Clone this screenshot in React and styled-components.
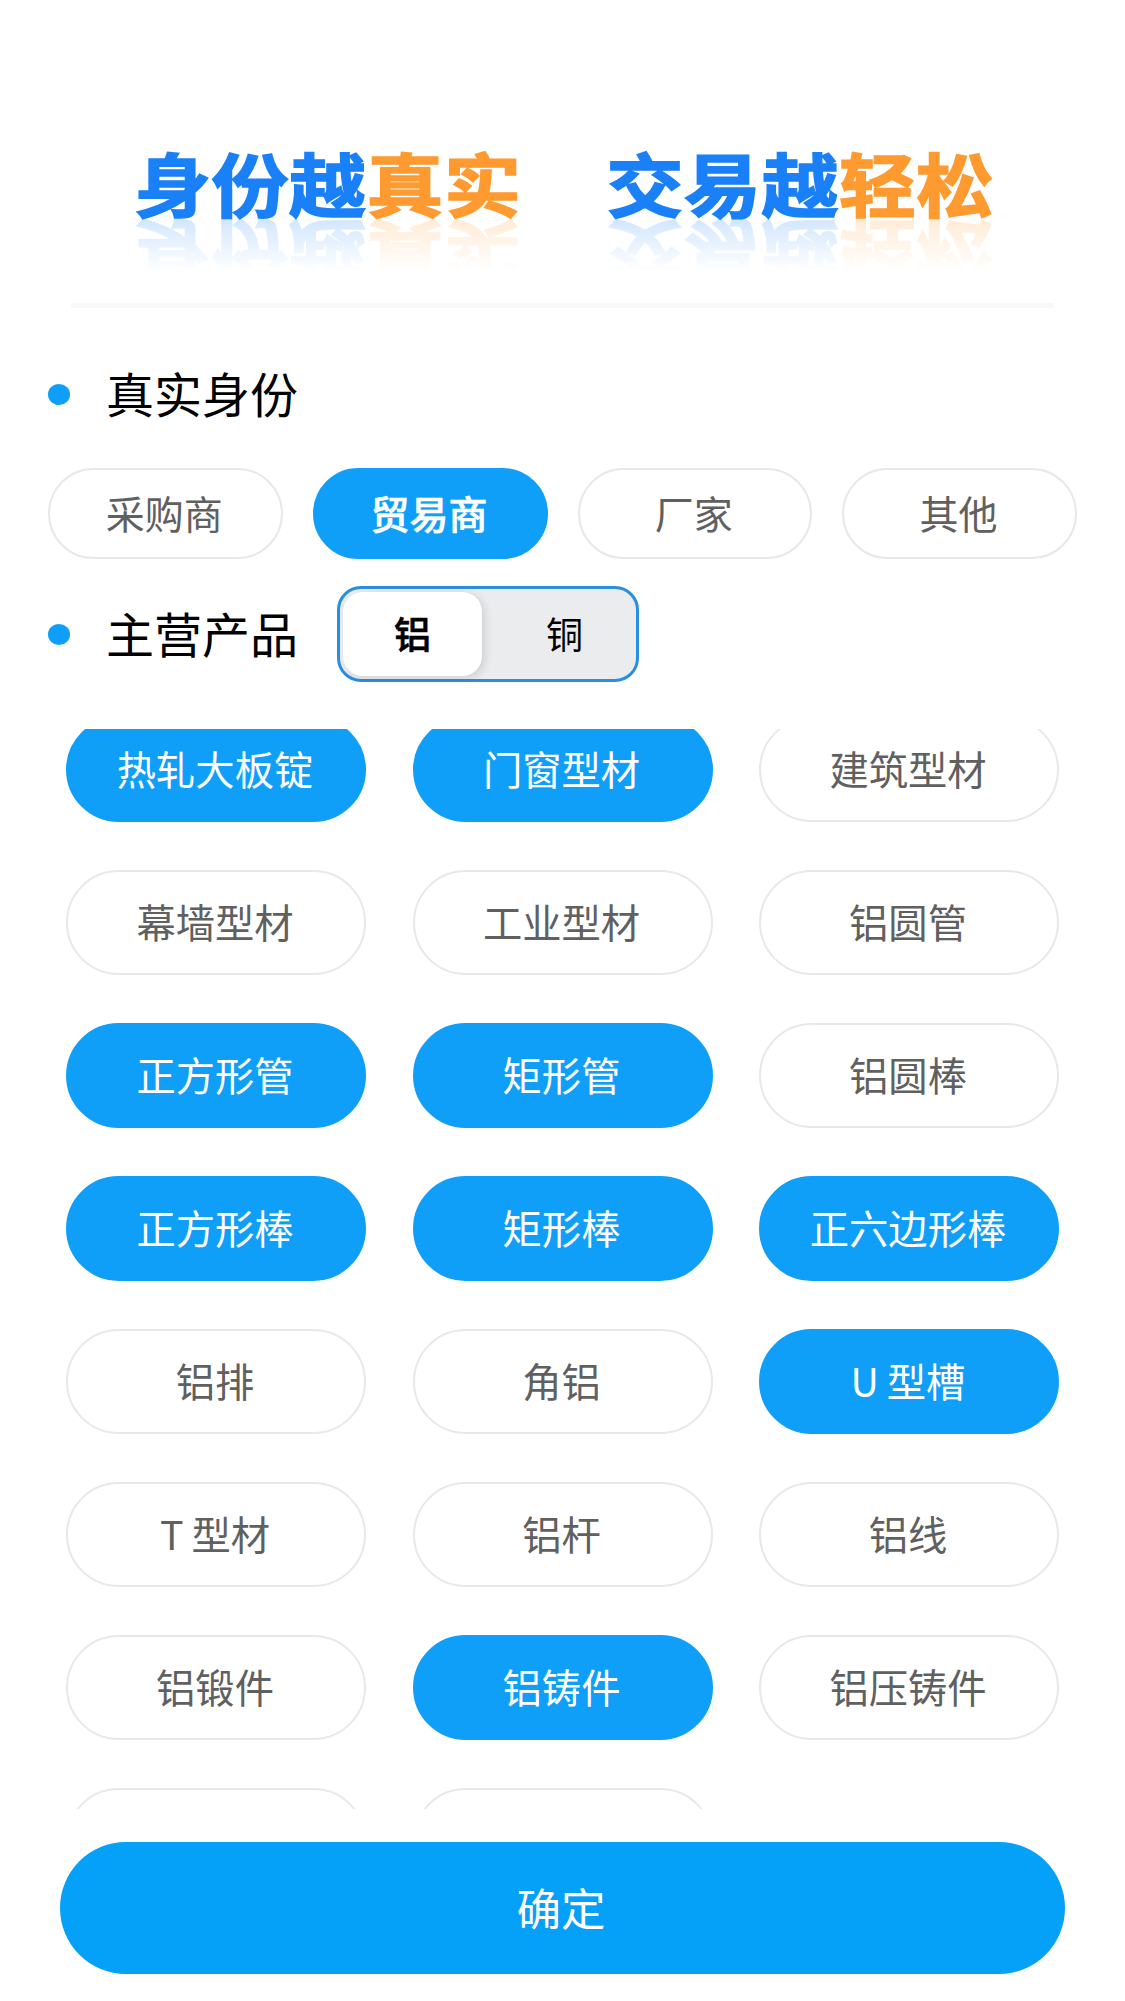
import React from "react";
import styled, { createGlobalStyle } from "styled-components";

const Global = createGlobalStyle`
  html, body { margin: 0; padding: 0; background: #fff; }
  * { box-sizing: border-box; }
`;

const FONT = `"Noto Sans CJK SC", "Noto Sans", sans-serif`;

const Page = styled.div`
  width: 1125px;
  height: 2001px;
  background: #fff;
  font-family: ${FONT};
  display: flex;
  flex-direction: column;
  overflow: hidden;
`;

const Banner = styled.header`
  height: 303px;
  padding: 140px 0 0 134px;
  display: flex;
  gap: 85px;
  align-items: flex-start;
`;

/* Squat display lettering with a faint mirrored fade underneath */
const Slogan = styled.div`
  display: flex;
  font-size: 77px;
  line-height: 84px;
  font-weight: 700;
  letter-spacing: 0.5px;
  -webkit-text-stroke: 1.8px currentColor;
  transform: scaleY(0.9);
  -webkit-box-reflect: below -2px linear-gradient(to bottom, transparent 30%, rgba(255, 255, 255, 0.2) 100%);
`;

const SloganPart = styled.span`
  color: ${(p) => (p.$warm ? "#ff9a30" : "#1a80f8")};
`;

const Divider = styled.div`
  height: 5px;
  margin: 0 71px;
  background: #f8f8f8;
`;

const Heading = styled.div`
  height: ${(p) => p.$height}px;
  margin-top: ${(p) => p.$top}px;
  padding-left: 48px;
  display: flex;
  align-items: center;
`;

const Dot = styled.span`
  width: 22px;
  height: 21px;
  border-radius: 50%;
  background: #109ff8;
`;

const HeadingText = styled.h2`
  margin: 0 39px 0 36px;
  padding-bottom: 5px;
  font-size: 48px;
  font-weight: 400;
  color: #000;
  line-height: 1;
`;

const RoleRow = styled.div`
  margin-top: 38px;
  padding: 0 48px;
  display: grid;
  grid-template-columns: repeat(4, 234.75px);
  column-gap: 30px;
`;

const Pill = styled.div`
  display: flex;
  align-items: center;
  justify-content: center;
  height: ${(p) => p.$height}px;
  padding: 0 2px 4px 0;
  border-radius: ${(p) => p.$height / 2}px;
  font-size: ${(p) => p.$size}px;
  font-weight: ${(p) => (p.$bold ? 500 : 400)};
  -webkit-text-stroke: ${(p) => (p.$bold ? "0.6px" : "0")} currentColor;
  color: ${(p) => (p.$on ? "#fff" : "#606060")};
  background: ${(p) => (p.$on ? "#109ff8" : "#fff")};
  border: 2px solid ${(p) => (p.$on ? "#109ff8" : "#e8e8e8")};
`;

const Toggle = styled.div`
  width: 302px;
  height: 96px;
  padding: 3px;
  border: 3px solid #2b8fe0;
  border-radius: 24px;
  background: #ebecee;
  display: flex;
  align-items: stretch;
`;

const ToggleThumb = styled.div`
  width: 139px;
  padding-bottom: 3px;
  background: #fff;
  border-radius: 20px;
  box-shadow: 3px 2px 8px rgba(0, 0, 0, 0.12);
  display: flex;
  align-items: center;
  justify-content: center;
  font-size: 37px;
  font-weight: 500;
  -webkit-text-stroke: 0.6px currentColor;
  color: #000;
`;

const ToggleOption = styled.div`
  flex: 1;
  padding: 0 0 3px 14px;
  display: flex;
  align-items: center;
  justify-content: center;
  font-size: 37px;
  color: #000;
`;

const ListViewport = styled.div`
  margin-top: 47px;
  height: 1080px;
  overflow: hidden;
`;

const ProductGrid = styled.div`
  margin-top: -12px;
  padding: 0 66px;
  display: grid;
  grid-template-columns: repeat(3, 300px);
  column-gap: 46.5px;
  row-gap: 48px;
`;

const ConfirmButton = styled.button`
  display: block;
  width: 1005px;
  height: 132px;
  margin: 33px 0 0 60px;
  padding: 0 3px 4px 0;
  border: 0;
  border-radius: 66px;
  background: #05a0f8;
  color: #fff;
  font-family: ${FONT};
  font-size: 44.5px;
  font-weight: 400;
`;

const roles = [
  { label: "采购商" },
  { label: "贸易商", on: true },
  { label: "厂家" },
  { label: "其他" },
];

const products = [
  ["热轧大板锭", true], ["门窗型材", true], ["建筑型材", false],
  ["幕墙型材", false], ["工业型材", false], ["铝圆管", false],
  ["正方形管", true], ["矩形管", true], ["铝圆棒", false],
  ["正方形棒", true], ["矩形棒", true], ["正六边形棒", true],
  ["铝排", false], ["角铝", false], ["U\u2009型槽", true],
  ["T\u2009型材", false], ["铝杆", false], ["铝线", false],
  ["铝锻件", false], ["铝铸件", true], ["铝压铸件", false],
  ["", false], ["", false],
];

export default function App() {
  return (
    <Page>
      <Global />
      <Banner>
        <Slogan>
          <SloganPart>身份越</SloganPart>
          <SloganPart $warm>真实</SloganPart>
        </Slogan>
        <Slogan>
          <SloganPart>交易越</SloganPart>
          <SloganPart $warm>轻松</SloganPart>
        </Slogan>
      </Banner>
      <Divider />

      <Heading $top={50} $height={72}>
        <Dot />
        <HeadingText>真实身份</HeadingText>
      </Heading>
      <RoleRow>
        {roles.map((r) => (
          <Pill key={r.label} $height={91} $size={39} $on={r.on} $bold={r.on}>
            {r.label}
          </Pill>
        ))}
      </RoleRow>

      <Heading $top={27} $height={96}>
        <Dot />
        <HeadingText>主营产品</HeadingText>
        <Toggle>
          <ToggleThumb>铝</ToggleThumb>
          <ToggleOption>铜</ToggleOption>
        </Toggle>
      </Heading>

      <ListViewport>
        <ProductGrid>
          {products.map(([label, on], i) => (
            <Pill key={i} $height={105} $size={39.3} $on={on}>
              {label}
            </Pill>
          ))}
        </ProductGrid>
      </ListViewport>

      <ConfirmButton>确定</ConfirmButton>
    </Page>
  );
}
